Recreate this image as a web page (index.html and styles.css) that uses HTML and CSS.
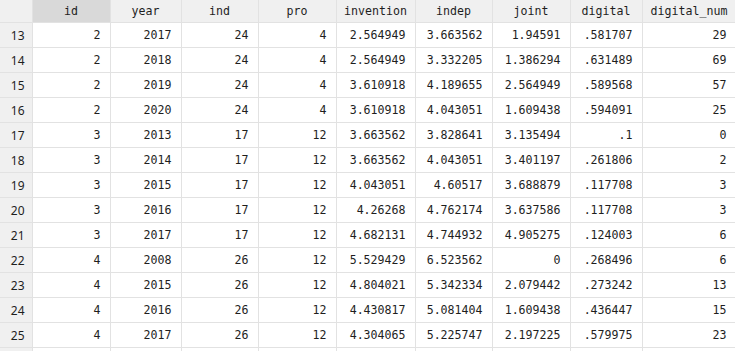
FILE: index.html
```html
<!DOCTYPE html>
<html lang="en">
<head>
    <meta charset="UTF-8">
    <title>Data Browser</title>
    <link rel="stylesheet" href="styles.css">
</head>
<body>
    <table class="grid">
        <colgroup>
            <col class="c-row">
            <col class="c-id">
            <col class="c-year">
            <col class="c-ind">
            <col class="c-pro">
            <col class="c-inv">
            <col class="c-indep">
            <col class="c-joint">
            <col class="c-dig">
            <col class="c-num">
        </colgroup>
        <thead>
            <tr>
                <th class="corner"></th>
                <th class="selected">id</th>
                <th>year</th>
                <th>ind</th>
                <th>pro</th>
                <th>invention</th>
                <th>indep</th>
                <th>joint</th>
                <th>digital</th>
                <th>digital_num</th>
            </tr>
        </thead>
        <tbody>
            <tr><td class="rownum">13</td><td>2</td><td>2017</td><td>24</td><td>4</td><td>2.564949</td><td>3.663562</td><td>1.94591</td><td>.581707</td><td>29</td></tr>
            <tr><td class="rownum">14</td><td>2</td><td>2018</td><td>24</td><td>4</td><td>2.564949</td><td>3.332205</td><td>1.386294</td><td>.631489</td><td>69</td></tr>
            <tr><td class="rownum">15</td><td>2</td><td>2019</td><td>24</td><td>4</td><td>3.610918</td><td>4.189655</td><td>2.564949</td><td>.589568</td><td>57</td></tr>
            <tr><td class="rownum">16</td><td>2</td><td>2020</td><td>24</td><td>4</td><td>3.610918</td><td>4.043051</td><td>1.609438</td><td>.594091</td><td>25</td></tr>
            <tr><td class="rownum">17</td><td>3</td><td>2013</td><td>17</td><td>12</td><td>3.663562</td><td>3.828641</td><td>3.135494</td><td>.1</td><td>0</td></tr>
            <tr><td class="rownum">18</td><td>3</td><td>2014</td><td>17</td><td>12</td><td>3.663562</td><td>4.043051</td><td>3.401197</td><td>.261806</td><td>2</td></tr>
            <tr><td class="rownum">19</td><td>3</td><td>2015</td><td>17</td><td>12</td><td>4.043051</td><td>4.60517</td><td>3.688879</td><td>.117708</td><td>3</td></tr>
            <tr><td class="rownum">20</td><td>3</td><td>2016</td><td>17</td><td>12</td><td>4.26268</td><td>4.762174</td><td>3.637586</td><td>.117708</td><td>3</td></tr>
            <tr><td class="rownum">21</td><td>3</td><td>2017</td><td>17</td><td>12</td><td>4.682131</td><td>4.744932</td><td>4.905275</td><td>.124003</td><td>6</td></tr>
            <tr><td class="rownum">22</td><td>4</td><td>2008</td><td>26</td><td>12</td><td>5.529429</td><td>6.523562</td><td>0</td><td>.268496</td><td>6</td></tr>
            <tr><td class="rownum">23</td><td>4</td><td>2015</td><td>26</td><td>12</td><td>4.804021</td><td>5.342334</td><td>2.079442</td><td>.273242</td><td>13</td></tr>
            <tr><td class="rownum">24</td><td>4</td><td>2016</td><td>26</td><td>12</td><td>4.430817</td><td>5.081404</td><td>1.609438</td><td>.436447</td><td>15</td></tr>
            <tr><td class="rownum">25</td><td>4</td><td>2017</td><td>26</td><td>12</td><td>4.304065</td><td>5.225747</td><td>2.197225</td><td>.579975</td><td>23</td></tr>
            <tr class="partial"><td class="rownum"></td><td></td><td></td><td></td><td></td><td></td><td></td><td></td><td></td><td></td></tr>
        </tbody>
    </table>
</body>
</html>
```

FILE: styles.css
```css
body {
    margin: 0;
    padding: 0;
    background: #fff;
    color: #1e1e1e;
    overflow: hidden;
}

.grid {
    border-collapse: collapse;
    table-layout: fixed;
    width: 736px;
    font-family: "DejaVu Sans Mono", "Liberation Mono", monospace;
    font-size: 11.6px;
}

.c-row { width: 32px; }
.c-id { width: 78px; }
.c-year { width: 71px; }
.c-ind { width: 77px; }
.c-pro { width: 78px; }
.c-inv { width: 79px; }
.c-indep { width: 77px; }
.c-joint { width: 78px; }
.c-dig { width: 72px; }
.c-num { width: 94px; }

.grid th,
.grid td {
    border: 1px solid #e2e2e2;
    padding: 0 9px 0 0;
    white-space: nowrap;
    overflow: hidden;
}

.grid th {
    height: 22px;
    background: #f0f0f0;
    font-weight: normal;
    text-align: center;
    padding: 0;
    border-top: none;
}

.grid th.selected {
    background: #d9d9d9;
}

.grid td {
    height: 24px;
    text-align: right;
}

.grid tr > :first-child {
    border-left: none;
}

.grid td.rownum {
    background: #f0f0f0;
    font-family: "Noto Sans", "Open Sans", sans-serif;
    font-size: 12px;
    text-align: right;
    padding: 0 7px 0 0;
}
```
